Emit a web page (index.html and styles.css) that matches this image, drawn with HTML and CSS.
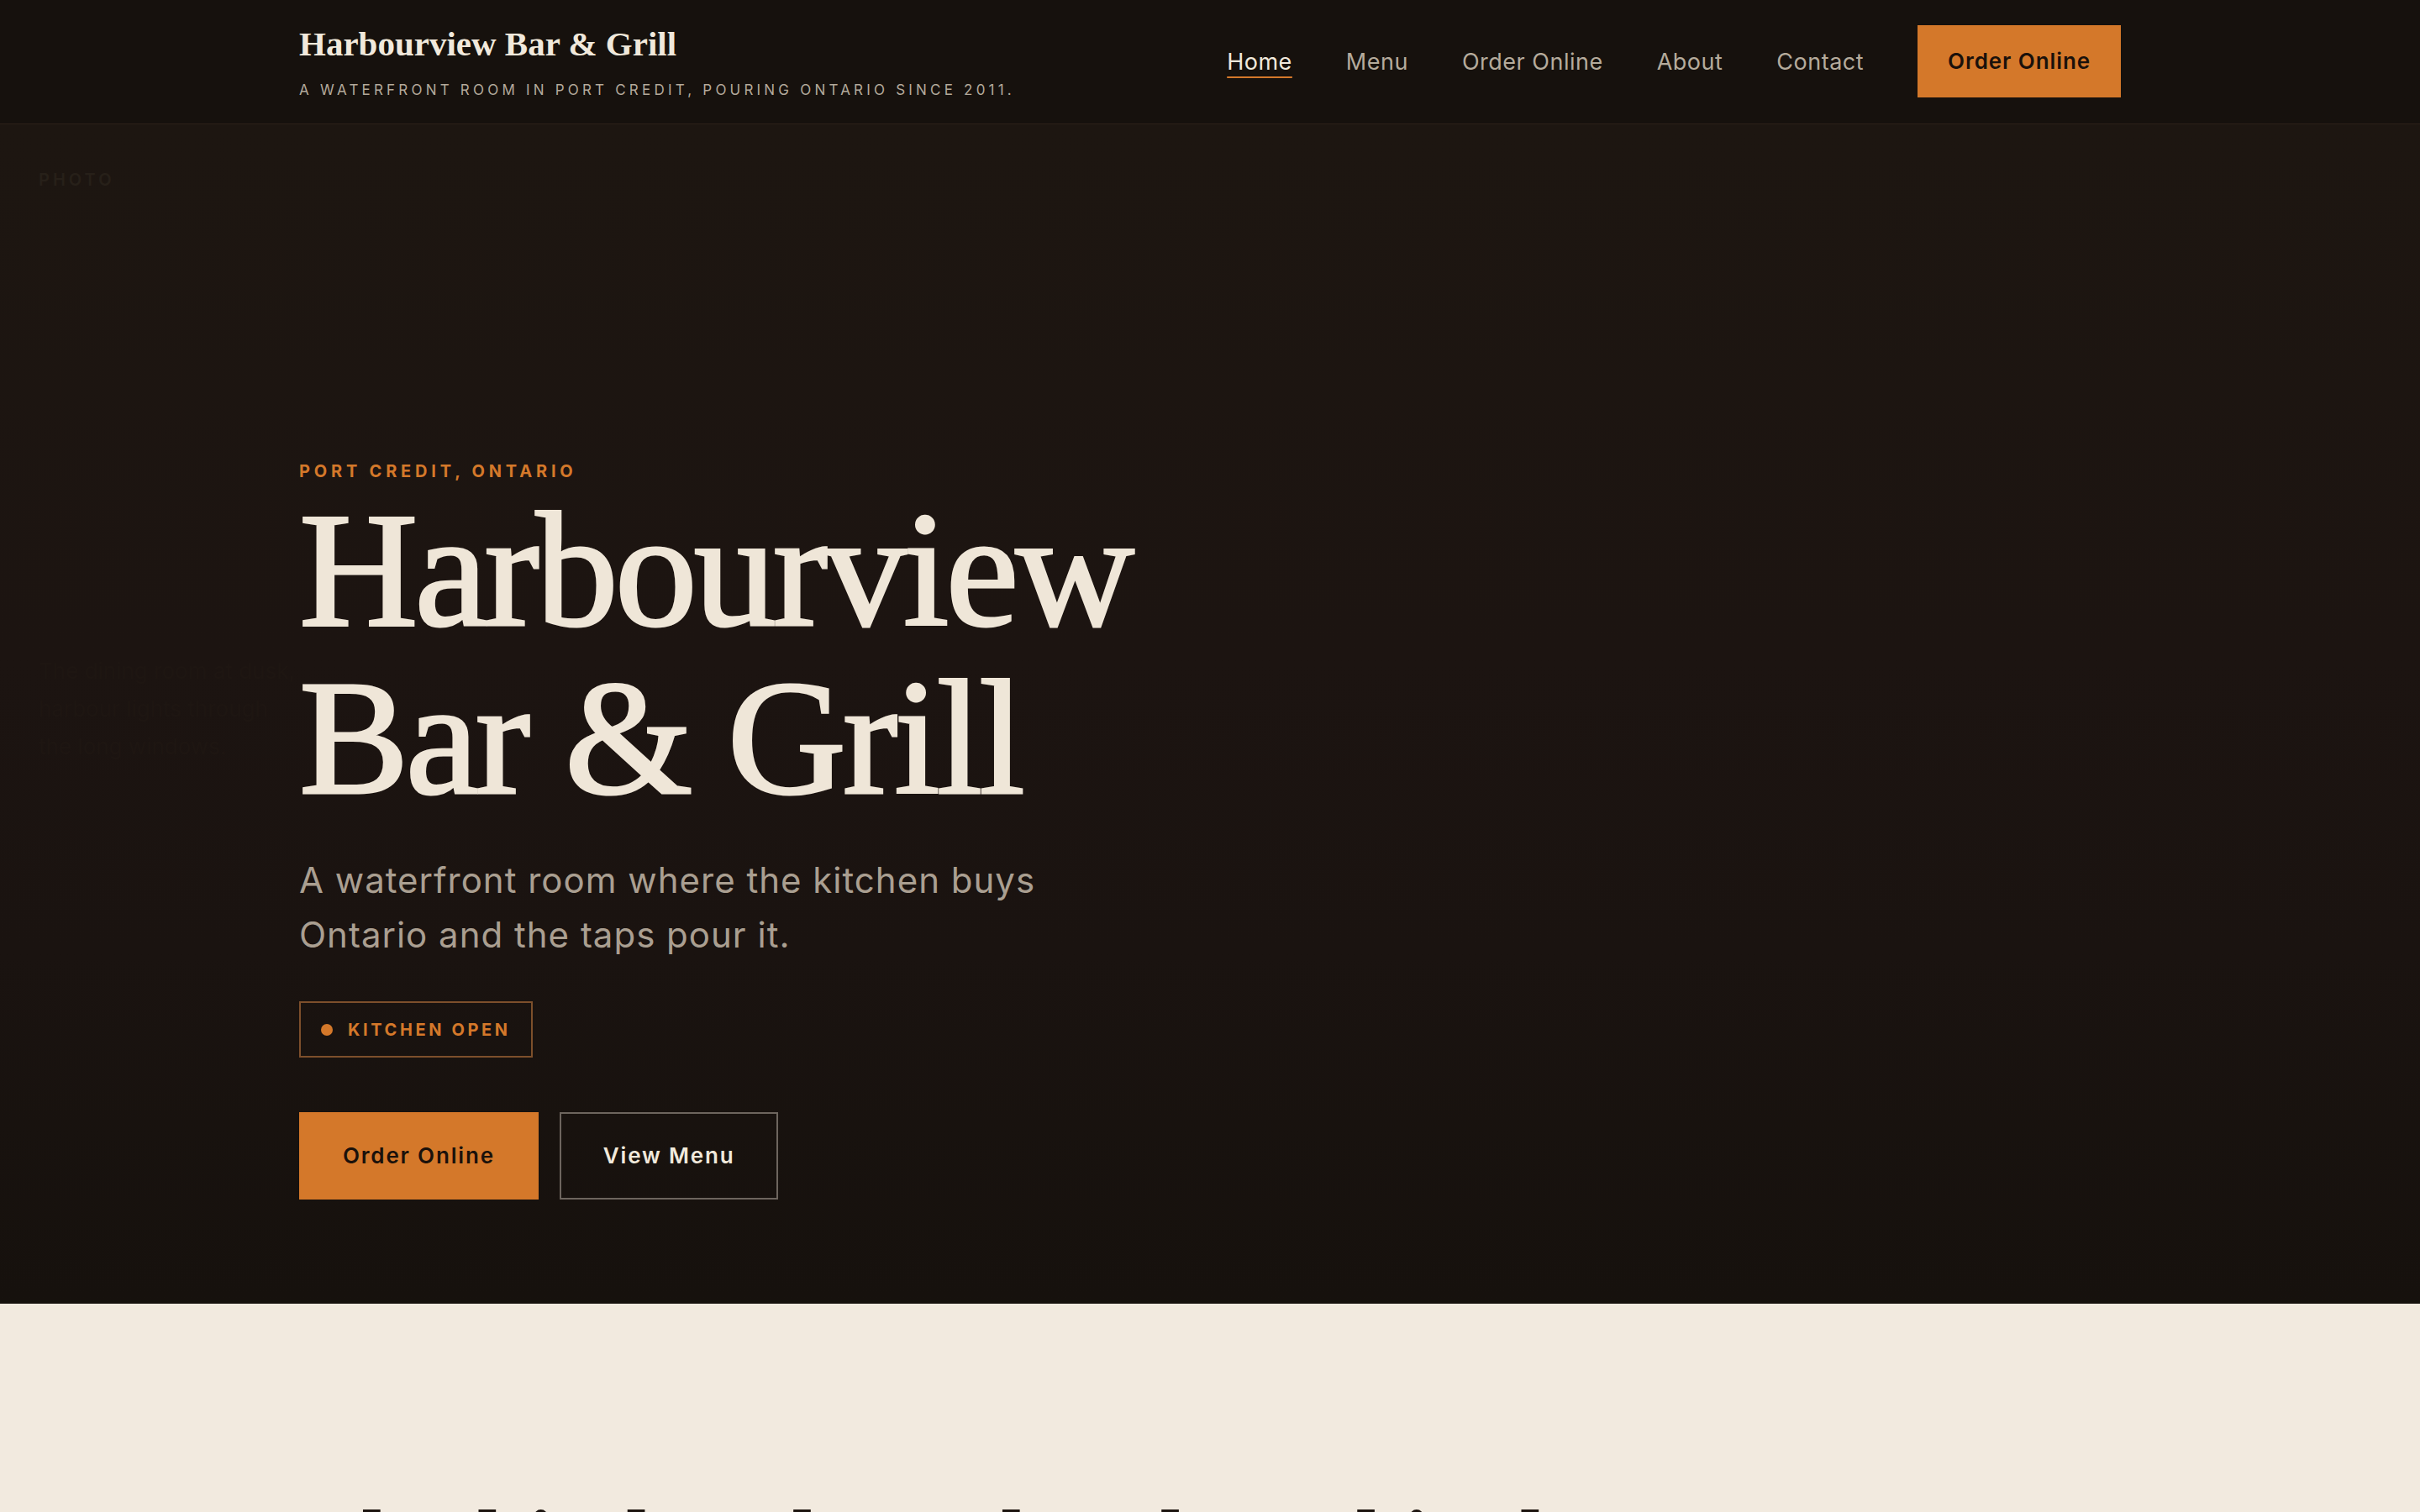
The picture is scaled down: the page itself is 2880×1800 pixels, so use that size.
FILE: index.html
```html
<!DOCTYPE html>
<html lang="en">
<head>
    <meta charset="UTF-8">
    <meta name="viewport" content="width=device-width, initial-scale=1.0">
    <title>Harbourview Bar &amp; Grill</title>
    <link rel="stylesheet" href="styles.css">
</head>
<body>
    <header class="site-header">
        <div class="wrap header-inner">
            <div class="brand">
                <a class="logo" href="#">Harbourview Bar &amp; Grill</a>
                <p class="tagline">A waterfront room in Port Credit, pouring Ontario since 2011.</p>
            </div>
            <nav class="main-nav">
                <a class="nav-link active" href="#">Home</a>
                <a class="nav-link" href="#">Menu</a>
                <a class="nav-link" href="#">Order Online</a>
                <a class="nav-link" href="#">About</a>
                <a class="nav-link" href="#">Contact</a>
                <a class="btn btn-primary btn-nav" href="#">Order Online</a>
            </nav>
        </div>
    </header>

    <section class="hero">
        <span class="photo-label">Photo</span>
        <p class="photo-caption">The dining room at dusk,<br>harbour lights through<br>the long windows.</p>

        <div class="wrap hero-content">
            <p class="eyebrow">Port Credit, Ontario</p>
            <h1 class="hero-title">Harbourview<br>Bar &amp; Grill</h1>
            <p class="lead">A waterfront room where the kitchen buys Ontario and the taps pour it.</p>
            <div class="status">
                <span class="status-dot"></span>
                <span>Kitchen Open</span>
            </div>
            <div class="hero-actions">
                <a class="btn btn-primary" href="#">Order Online</a>
                <a class="btn btn-outline" href="#">View Menu</a>
            </div>
        </div>
    </section>

    <section class="intro">
        <div class="wrap">
            <h2 class="section-title">The kitchen buys local, and it shows.</h2>
        </div>
    </section>
</body>
</html>
```

FILE: styles.css
```css
body {
    margin: 0;
    background-color: #16110d;
    color: #efe6d8;
    font-family: Inter, 'Noto Sans', sans-serif;
}
a {
    color: inherit;
    text-decoration: none;
}
p, h1, h2 {
    margin: 0;
}
.wrap {
    max-width: 2168px;
    margin: 0 auto;
}

/* header */
.site-header {
    background-color: #16110d;
    border-bottom: 1px solid #2c2119;
}
.header-inner {
    display: flex;
    justify-content: space-between;
    align-items: center;
    padding: 28px 0 29px;
}
.logo {
    display: block;
    font-family: 'Liberation Serif', serif;
    font-weight: bold;
    font-size: 41px;
    line-height: 1.2;
    color: #f1e9dc;
}
.tagline {
    margin-top: 19px;
    font-size: 17px;
    line-height: 1.3;
    text-transform: uppercase;
    letter-spacing: 4.2px;
    color: #b3a99b;
}
.main-nav {
    display: flex;
    align-items: center;
    gap: 64px;
}
.nav-link {
    font-size: 27px;
    letter-spacing: 0.5px;
    color: #b5ab9c;
}
.nav-link.active {
    color: #f1e9dc;
    text-decoration: underline;
    text-decoration-color: #d4782a;
    text-decoration-thickness: 2px;
    text-underline-offset: 8px;
}

/* buttons */
.btn {
    display: inline-block;
    font-size: 26px;
    font-weight: 600;
    line-height: 30px;
    letter-spacing: 0.07em;
    padding: 35px 50px;
    border: 2px solid transparent;
}
.btn-primary {
    background-color: #d4782a;
    border-color: #d4782a;
    color: #1a110b;
}
.btn-outline {
    border-color: #6d655e;
    color: #f1e9dc;
}
.btn-nav {
    padding: 26px 34px;
    letter-spacing: 0.035em;
}

/* hero */
.hero {
    position: relative;
    min-height: 78vh;
    display: flex;
    flex-direction: column;
    justify-content: flex-end;
    padding-bottom: 124px;
    box-sizing: border-box;
    background: linear-gradient(180deg, #1d1611 0%, #1c1411 45%, #1a1310 70%, #16110d 100%);
    overflow: hidden;
}
.photo-label {
    position: absolute;
    top: 54px;
    left: 46px;
    font-size: 20px;
    font-weight: 600;
    letter-spacing: 0.2em;
    text-transform: uppercase;
    color: #272019;
}
.photo-caption {
    position: absolute;
    top: 628px;
    left: 46px;
    font-size: 26px;
    line-height: 45px;
    color: #1e1612;
}
.hero-content {
    position: relative;
    width: 100%;
}
.eyebrow {
    font-size: 20px;
    font-weight: 700;
    line-height: 28px;
    letter-spacing: 0.24em;
    text-transform: uppercase;
    color: #d4782a;
    margin-bottom: 3px;
}
.hero-title {
    font-family: 'Liberation Serif', serif;
    font-weight: normal;
    font-size: 196px;
    line-height: 200px;
    letter-spacing: -4px;
    -webkit-text-stroke: 3px #efe6d8;
    color: #efe6d8;
}
.lead {
    max-width: 960px;
    margin-top: 37px;
    font-size: 42px;
    line-height: 65px;
    letter-spacing: 1px;
    color: #aa9f91;
}
.status {
    display: inline-flex;
    align-items: center;
    gap: 18px;
    height: 67px;
    box-sizing: border-box;
    margin-top: 47px;
    padding: 0 24px;
    border: 2px solid #7d4f2b;
    font-size: 20px;
    font-weight: 700;
    letter-spacing: 0.18em;
    text-transform: uppercase;
    color: #d4782a;
}
.status-dot {
    width: 14px;
    height: 14px;
    border-radius: 50%;
    background-color: #d4782a;
}
.hero-actions {
    display: flex;
    gap: 25px;
    margin-top: 65px;
}

/* intro */
.intro {
    background-color: #f2eadf;
    padding: 225px 0 120px;
}
.section-title {
    font-family: 'Liberation Serif', serif;
    font-size: 110px;
    line-height: 1.1;
    color: #1d1510;
}
```
